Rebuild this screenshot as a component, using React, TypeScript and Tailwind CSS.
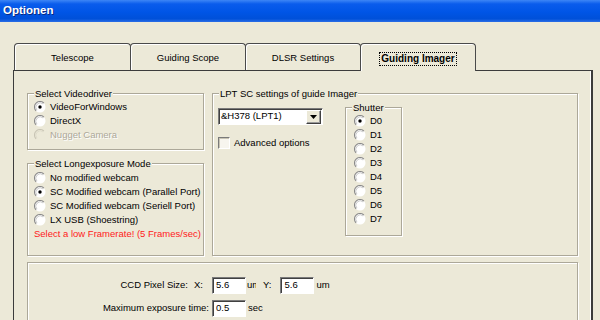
import type { ReactNode } from 'react';

const Radio = ({ checked = false, disabled = false }: { checked?: boolean; disabled?: boolean }) => (
  <svg width="12" height="12" viewBox="0 0 12 12" className="shrink-0">
    <circle cx="6" cy="6" r="5.5" fill={disabled ? '#ece9d8' : '#fff'} />
    <path d="M2.1 9.9 A5.5 5.5 0 0 1 9.9 2.1" fill="none" stroke={disabled ? '#c8c4b4' : '#8a8a8a'} strokeWidth="1.1" />
    <path d="M2.9 9.1 A4.4 4.4 0 0 1 9.1 2.9" fill="none" stroke={disabled ? '#dcd8c8' : '#c0c0c0'} strokeWidth="0.8" />
    {checked && <circle cx="6" cy="6" r="1.7" fill="#000" />}
  </svg>
);

const RadioRow = ({ label, checked, disabled }: { label: string; checked?: boolean; disabled?: boolean }) => (
  <div className="flex h-[14px] items-center gap-[4px]">
    <Radio checked={checked} disabled={disabled} />
    <span className={disabled ? 'text-[#aca899] [text-shadow:1px_1px_0_#fff]' : ''}>{label}</span>
  </div>
);

const GroupBox = ({ label, className, children }: { label: string; className: string; children: ReactNode }) => (
  <div className={`relative border border-[#aca899] shadow-[1px_1px_0_#fff,inset_1px_1px_0_#fff] ${className}`}>
    <span className="absolute -top-[7px] left-[6px] bg-[#ece9d8] px-[1px] leading-[13px]">{label}</span>
    {children}
  </div>
);

const Field = ({ value }: { value: string }) => (
  <div className="flex h-[17px] w-[34px] items-center border border-t-[#7a7a7a] border-l-[#7a7a7a] border-b-white border-r-white bg-white pl-[3px] shadow-[inset_1px_1px_0_#404040]">
    {value}
  </div>
);

const tabs = ['Telescope', 'Guiding Scope', 'DLSR Settings', 'Guiding Imager'];

export default function App() {
  return (
    <div className="h-[320px] w-[600px] overflow-hidden bg-[#ece9d8] text-[9.5px] text-black [font-family:'Liberation_Sans',Arial,sans-serif]">
      {/* title bar */}
      <div className="flex h-[22px] items-center bg-[linear-gradient(180deg,#3d86f6_0%,#0a5cec_18%,#0055e6_55%,#0050d9_85%,#2a6ee6_100%)] pl-[3px]">
        <span className="text-[11.5px] font-bold text-white [text-shadow:1px_1px_0_#0a2a80]">Optionen</span>
      </div>

      {/* tabs */}
      <div className="ml-[14px] mt-[21px] flex items-end">
        {tabs.map((t, i) => {
          const active = i === 3;
          return (
            <div
              key={t}
              className={`-ml-px flex h-[27px] items-center justify-center rounded-t-[4px] border border-b-0 border-[#4a4a4a] bg-[#ece9d8] pt-[3px] shadow-[inset_1px_1px_0_#fff] ${
                active ? 'relative z-10 -mb-px h-[28px] w-[116px] font-bold text-[10px]' : i === 0 ? 'ml-0 w-[117px]' : 'w-[116px]'
              }`}
            >
              {active ? <span className="px-[1px] leading-[12px] outline-1 outline-dotted outline-black">{t}</span> : t}
            </div>
          );
        })}
      </div>

      {/* tab panel */}
      <div className="ml-[13px] w-[580px] border border-r-2 border-[#3c3c3c] pl-[13px] pr-[13px] pt-[22px] shadow-[inset_-1px_0_0_#fff]">
        <div className="flex gap-[8px]">
          <div className="flex w-[177px] flex-col gap-[13px]">
            <GroupBox label="Select Videodriver" className="h-[57px] pl-[6px] pt-[6px]">
              <RadioRow label="VideoForWindows" checked />
              <RadioRow label="DirectX" />
              <RadioRow label="Nugget Camera" disabled />
            </GroupBox>
            <GroupBox label="Select Longexposure Mode" className="h-[93px] pl-[6px] pt-[7px]">
              <RadioRow label="No modified webcam" />
              <RadioRow label="SC Modified webcam (Parallel Port)" checked />
              <RadioRow label="SC Modified webcam (Seriell Port)" />
              <RadioRow label="LX USB (Shoestring)" />
              <div className="flex h-[14px] items-center text-[#ff1a1a]">Select a low Framerate! (5 Frames/sec)</div>
            </GroupBox>
          </div>

          <GroupBox label="LPT SC settings of guide Imager" className="flex h-[163px] w-[366px] pl-[5px] pt-[13px]">
            <div className="flex w-[127px] flex-col pt-[1px]">
              <div className="flex h-[17px] w-[105px] items-center border border-t-[#7a7a7a] border-l-[#7a7a7a] border-b-white border-r-white bg-white shadow-[inset_1px_1px_0_#404040]">
                <span className="flex-1 pl-[2px]">&amp;H378 (LPT1)</span>
                <div className="mr-px flex h-[14px] w-[15px] items-center justify-center border border-t-white border-l-white border-b-[#404040] border-r-[#404040] bg-[#ece9d8] shadow-[inset_-1px_-1px_0_#9a9a9a]">
                  <svg width="7" height="4" viewBox="0 0 7 4">
                    <path d="M0 0 H7 L3.5 4 Z" fill="#000" />
                  </svg>
                </div>
              </div>
              <div className="mt-[11px] flex h-[14px] items-center gap-[4px]">
                <div className="h-[12px] w-[12px] border border-t-[#7a7a7a] border-l-[#7a7a7a] border-b-white border-r-white bg-[#f7f5ee] shadow-[inset_1px_1px_0_#c8c4b4]" />
                <span>Advanced options</span>
              </div>
            </div>
            <GroupBox label="Shutter" className="h-[129px] w-[57px] pl-[8px] pt-[6px]">
              {['D0', 'D1', 'D2', 'D3', 'D4', 'D5', 'D6', 'D7'].map((d, i) => (
                <RadioRow key={d} label={d} checked={i === 0} />
              ))}
            </GroupBox>
          </GroupBox>
        </div>

        <div className="mt-[6px] h-[70px] w-[551px] border border-[#aca899] pt-[14px] shadow-[1px_1px_0_#fff,inset_1px_1px_0_#fff]">
          <div className="flex h-[17px] items-center">
            <div className="w-[181px] pr-[6px] text-right">
              CCD Pixel Size:<span className="ml-[6px]">X:</span>
            </div>
            <div className="ml-[3px]">
              <Field value="5.6" />
            </div>
            <span className="ml-[1px] w-[9px] overflow-hidden whitespace-nowrap">um</span>
            <span className="ml-[7px]">Y:</span>
            <div className="ml-[9px]">
              <Field value="5.6" />
            </div>
            <span className="ml-[2px]">um</span>
          </div>
          <div className="mt-[6px] flex h-[17px] items-center">
            <div className="w-[181px] text-right">Maximum exposure time:</div>
            <div className="ml-[3px]">
              <Field value="0.5" />
            </div>
            <span className="ml-[2px]">sec</span>
          </div>
        </div>
      </div>
    </div>
  );
}
